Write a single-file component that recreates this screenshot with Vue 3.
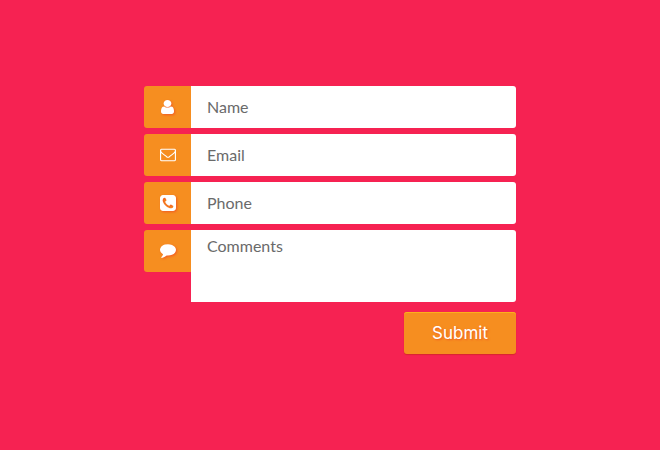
<script setup>
import { reactive } from 'vue'

const form = reactive({ name: '', email: '', phone: '', comments: '' })
</script>

<template>
  <main class="page">
    <form class="contact" @submit.prevent>
      <div class="field">
        <label class="badge" for="name" aria-label="Name">
          <svg class="icon icon-user" viewBox="256 128 1280 1536" preserveAspectRatio="none" aria-hidden="true">
            <path d="M1536 1399q0 109-62.5 187t-150.5 78h-854q-88 0-150.5-78t-62.5-187q0-85 8.5-160.5t31.5-152 58.5-131 94-89 134.5-34.5q131 128 313 128t313-128q76 0 134.5 34.5t94 89 58.5 131 31.5 152 8.5 160.5zm-256-887q0 159-112.5 271.5t-271.5 112.5-271.5-112.5-112.5-271.5 112.5-271.5 271.5-112.5 271.5 112.5 112.5 271.5z" />
          </svg>
        </label>
        <input id="name" v-model="form.name" class="control" type="text" placeholder="Name">
      </div>

      <div class="field">
        <label class="badge" for="email" aria-label="Email">
          <svg class="icon icon-flat" viewBox="0 64 1792 1792" aria-hidden="true">
            <path d="M1664 1504v-768q-32 36-69 66-268 206-426 338-51 43-83 67t-86.5 48.5-102.5 24.5h-2q-48 0-102.5-24.5t-86.5-48.5-83-67q-158-132-426-338-37-30-69-66v768q0 13 9.5 22.5t22.5 9.5h1472q13 0 22.5-9.5t9.5-22.5zm0-1051v-24.5l-.5-13-3-12.5-5.5-9-9-7.5-14-2.5h-1472q-13 0-22.5 9.5t-9.5 22.5q0 168 147 284 193 152 401 317 6 5 35 29.5t46 37.5 44.5 31.5 50.5 27.5 43 9h2q20 0 43-9t50.5-27.5 44.5-31.5 46-37.5 35-29.5q208-165 401-317 54-43 100.5-115.5t46.5-131.5zm128-37v1088q0 66-47 113t-113 47h-1472q-66 0-113-47t-47-113v-1088q0-66 47-113t113-47h1472q66 0 113 47t47 113z" />
          </svg>
        </label>
        <input id="email" v-model="form.email" class="control" type="email" placeholder="Email">
      </div>

      <div class="field">
        <label class="badge" for="phone" aria-label="Phone">
          <svg class="icon" viewBox="128 128 1536 1536" aria-hidden="true">
            <path d="M1408 1193q0-11-2-16t-18-16.5-40.5-25-47.5-26.5-45.5-25-28.5-15q-5-3-19-13t-25-15-21-5q-15 0-36.5 20.5t-39.5 45-38.5 45-33.5 20.5q-7 0-16.5-3.5t-15.5-6.5-17-9.5-14-8.5q-99-55-170-126.5t-127-170.5q-2-3-8.5-14t-9.5-17-6.5-15.5-3.5-16.5q0-13 20.5-33.5t45-38.5 45-39.5 20.5-36.5q0-10-5-21t-15-25-13-19q-3-6-15-28.5t-25-45.5-26.5-47.5-25-40.5-16.5-18-16-2q-48 0-101 22-46 21-80 94.5t-34 130.5q0 16 2.5 34t5 30.5 9 33 10 29.5 12.5 33 11 30q60 164 216.5 320.5t320.5 216.5q6 2 30 11t33 12.5 29.5 10 33 9 30.5 5 34 2.5q57 0 130.5-34t94.5-80q22-53 22-101zm256-777v960q0 119-84.5 203.5t-203.5 84.5h-960q-119 0-203.5-84.5t-84.5-203.5v-960q0-119 84.5-203.5t203.5-84.5h960q119 0 203.5 84.5t84.5 203.5z" />
          </svg>
        </label>
        <input id="phone" v-model="form.phone" class="control" type="tel" placeholder="Phone">
      </div>

      <div class="field">
        <label class="badge" for="comments" aria-label="Comments">
          <svg class="icon" viewBox="0 128 1792 1792" aria-hidden="true">
            <path d="M1792 896q0 174-120 321.5t-326 233-450 85.5q-70 0-145-8-198 175-460 242-49 14-114 22-17 2-30.5-9t-17.5-29v-1q-3-4-.5-12t2-10 4.5-9.5l6-9 7-8.5 8-9q7-8 31-34.5t34.5-38 31-39.5 32.5-51 27-59 26-76q-157-89-247.5-220t-90.5-281q0-130 71-248.5t191-204.5 286-136.5 348-50.5q244 0 450 85.5t326 233 120 321.5z" />
          </svg>
        </label>
        <textarea id="comments" v-model="form.comments" class="control control-area" placeholder="Comments"></textarea>
      </div>

      <button class="submit" type="submit">Submit</button>
    </form>
  </main>
</template>

<style>
body {
  background: #f62252;
}
</style>

<style scoped>
.page {
  box-sizing: border-box;
  display: flex;
  justify-content: center;
  min-height: 100vh;
  padding: 86px 16px;
  font-family: Lato, "Liberation Sans", sans-serif;
}

.contact {
  display: flex;
  flex-direction: column;
  gap: 6px;
  width: 100%;
  max-width: 372px;
}

.field {
  display: flex;
  align-items: flex-start;
}

.badge {
  display: flex;
  flex: none;
  align-items: center;
  justify-content: center;
  width: 47px;
  height: 42px;
  border-radius: 3px 0 0 3px;
  background: #f68e20;
}

.icon {
  display: block;
  width: 16px;
  height: 16px;
  fill: #fff;
  filter: drop-shadow(1px 1px 1px #f15a22);
}

.icon-user {
  width: 13px;
  height: 14px;
}

.icon-flat {
  filter: none;
}

.control {
  box-sizing: border-box;
  flex: 1;
  min-width: 0;
  height: 42px;
  margin: 0;
  padding: 0 16px 2px;
  border: 0;
  border-radius: 0 3px 3px 0;
  outline: 0;
  background: #fff;
  color: #6a6a6a;
  font: 400 16px/20px Lato, "Liberation Sans", sans-serif;
}

.control::placeholder {
  color: #6a6a6a;
  opacity: 1;
}

.control-area {
  display: block;
  height: 72px;
  padding: 6px 16px;
  resize: none;
}

.submit {
  align-self: flex-end;
  width: 112px;
  height: 42px;
  margin: 4px 0 0;
  padding: 0;
  border: 0;
  border-radius: 3px;
  background: #f68e20;
  box-shadow: inset 0 1px 0 #fbb01c, 0 1px 1px #d9252f;
  color: #fff;
  font: 400 17px/20px Inter, "Liberation Sans", sans-serif;
  text-shadow: 1px 1px 2px #f15a22;
  cursor: pointer;
}
</style>
